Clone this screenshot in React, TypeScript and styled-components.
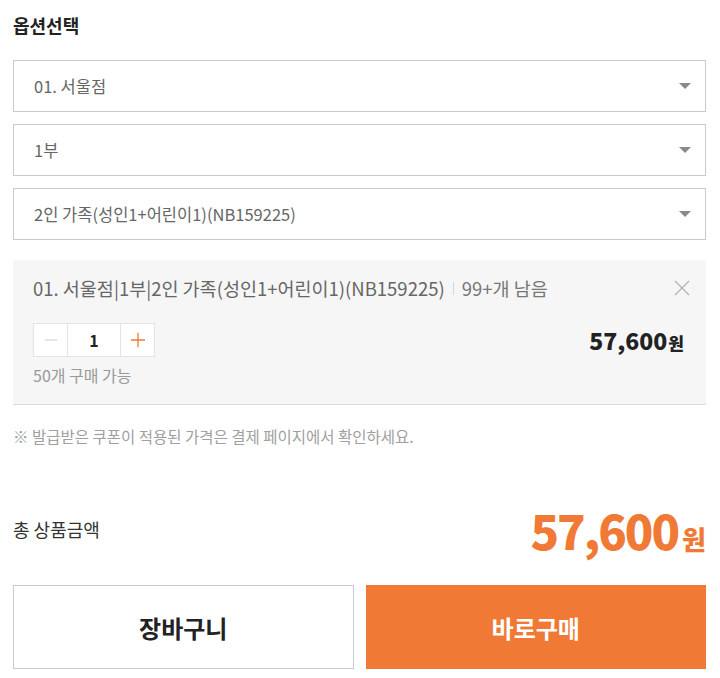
import { createGlobalStyle, styled } from 'styled-components';

const GlobalStyle = createGlobalStyle`
  html, body {
    margin: 0;
    padding: 0;
    background: #fff;
  }
  body {
    font-family: "Noto Sans CJK KR", "Noto Sans", sans-serif;
    color: #222;
  }
  * {
    box-sizing: border-box;
  }
`;

const options = ['01. 서울점', '1부', '2인 가족(성인1+어린이1)(NB159225)'];

const App = () => {
  return (
    <>
      <GlobalStyle />
      <Wrapper>
        <Title>옵션선택</Title>
        <SelectList>
          {options.map((option) => (
            <Select key={option}>
              <span>{option}</span>
              <Arrow />
            </Select>
          ))}
        </SelectList>

        <SelectedItem>
          <ItemHeader>
            <ItemName>
              01. 서울점|1부|2인 가족(성인1+어린이1)(NB159225)
              <Divider />
              <Stock>99+개 남음</Stock>
            </ItemName>
            <CloseButton aria-label="삭제">
              <svg width="16" height="16" viewBox="0 0 16 16">
                <path d="M1 1L15 15M15 1L1 15" stroke="#b5b5b5" strokeWidth="1.4" />
              </svg>
            </CloseButton>
          </ItemHeader>
          <ItemBody>
            <Stepper>
              <StepButton $disabled>
                <svg width="12" height="12" viewBox="0 0 12 12">
                  <path d="M0 6H12" stroke="#d6d6d6" strokeWidth="1.2" />
                </svg>
              </StepButton>
              <Count>1</Count>
              <StepButton>
                <svg width="14" height="14" viewBox="0 0 14 14">
                  <path d="M0 7H14M7 0V14" stroke="#f07a35" strokeWidth="1.3" />
                </svg>
              </StepButton>
            </Stepper>
            <ItemPrice>
              57,600<small>원</small>
            </ItemPrice>
          </ItemBody>
          <Limit>50개 구매 가능</Limit>
        </SelectedItem>

        <Notice>※ 발급받은 쿠폰이 적용된 가격은 결제 페이지에서 확인하세요.</Notice>

        <TotalRow>
          <TotalLabel>총 상품금액</TotalLabel>
          <TotalPrice>
            57,600<small>원</small>
          </TotalPrice>
        </TotalRow>

        <ButtonRow>
          <CartButton>장바구니</CartButton>
          <BuyButton>바로구매</BuyButton>
        </ButtonRow>
      </Wrapper>
    </>
  );
};

export default App;

const Wrapper = styled.div`
  display: flex;
  flex-direction: column;

  width: 720px;
  padding: 10px 14px 0 13px;
`;

const Title = styled.h2`
  margin: 0;

  height: 30px;
  line-height: 30px;

  color: #222;
  font-size: 18px;
  font-weight: 700;
`;

const SelectList = styled.div`
  display: flex;
  flex-direction: column;
  gap: 12px;

  margin-top: 20px;
`;

const Select = styled.div`
  display: flex;
  align-items: center;
  justify-content: space-between;

  height: 52px;
  padding: 0 14px 0 20px;

  border: 1px solid #c6cbd1;
  background: #fff;

  color: #666;
  font-size: 16.5px;
`;

const Arrow = styled.span`
  width: 0;
  height: 0;

  border-left: 6px solid transparent;
  border-right: 6px solid transparent;
  border-top: 6px solid #8a8a8a;
`;

const SelectedItem = styled.div`
  display: flex;
  flex-direction: column;

  margin-top: 20px;
  padding: 13px 20px 17px 20px;

  background: #f6f6f6;
  border-bottom: 1px solid #dcdcdc;
`;

const ItemHeader = styled.div`
  display: flex;
  align-items: center;
  justify-content: space-between;

  height: 30px;
`;

const ItemName = styled.div`
  display: flex;
  align-items: center;

  color: #666;
  font-size: 18.5px;
`;

const Divider = styled.span`
  display: inline-block;

  width: 1px;
  height: 13px;
  margin: 0 8px;

  background: #d4d4d4;
`;

const Stock = styled.span`
  color: #777;
`;

const CloseButton = styled.button`
  display: flex;
  align-items: center;
  justify-content: center;

  padding: 0;
  margin-right: -4px;

  border: none;
  background: none;
`;

const ItemBody = styled.div`
  display: flex;
  align-items: center;
  justify-content: space-between;

  margin-top: 20px;
`;

const Stepper = styled.div`
  display: flex;

  height: 34px;

  border: 1px solid #e2e2e2;
  background: #fff;
`;

const StepButton = styled.button<{ $disabled?: boolean }>`
  display: flex;
  align-items: center;
  justify-content: center;

  width: 33px;
  height: 100%;
  padding: 0;

  border: none;
  background: #fff;
  cursor: ${({ $disabled }) => ($disabled ? 'default' : 'pointer')};
`;

const Count = styled.div`
  display: flex;
  align-items: center;
  justify-content: center;

  width: 54px;

  border-left: 1px solid #e2e2e2;
  border-right: 1px solid #e2e2e2;

  color: #222;
  font-size: 16px;
  font-weight: 700;
`;

const ItemPrice = styled.div`
  margin-right: 2px;

  color: #222;
  font-size: 23px;
  font-weight: 800;

  small {
    font-size: 17px;
    margin-left: 1px;
  }
`;

const Limit = styled.div`
  margin-top: 6px;

  color: #999;
  font-size: 16px;
`;

const Notice = styled.p`
  margin: 20px 0 0;

  color: #a0a0a0;
  font-size: 15.5px;
`;

const TotalRow = styled.div`
  display: flex;
  align-items: center;
  justify-content: space-between;

  margin-top: 50px;
  height: 64px;
`;

const TotalLabel = styled.div`
  color: #333;
  font-size: 18px;
`;

const TotalPrice = styled.div`
  color: #f07a35;
  font-size: 47px;
  font-weight: 800;
  letter-spacing: -2px;

  small {
    font-size: 26px;
    margin-left: 4px;
    letter-spacing: 0;
  }
`;

const ButtonRow = styled.div`
  display: grid;
  grid-template-columns: 1fr 1fr;
  gap: 12px;

  margin-top: 24px;
`;

const CartButton = styled.button`
  height: 84px;

  border: 1px solid #c6cbd1;
  background: #fff;

  color: #222;
  font-family: inherit;
  font-size: 24px;
  font-weight: 700;
`;

const BuyButton = styled(CartButton)`
  border-color: #f07a35;
  background: #f07a35;

  color: #fff;
`;
